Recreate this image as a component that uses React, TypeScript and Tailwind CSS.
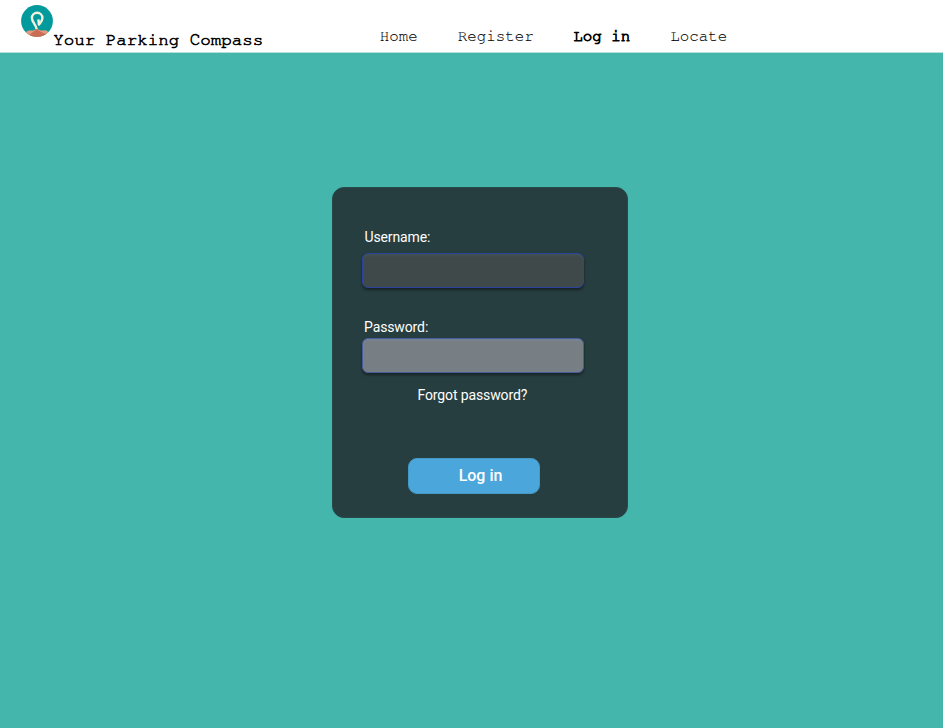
import React from "react";

function Logo() {
  return (
    <svg className="ml-[21.3px] mt-[5px] h-8 w-8 shrink-0" viewBox="0 0 32 32">
      <defs>
        <clipPath id="disc">
          <circle cx="16" cy="16" r="15.9" />
        </clipPath>
      </defs>
      <g clipPath="url(#disc)">
        <rect width="32" height="32" fill="#029a9d" />
        <path d="M3 28 L7.5 25.5 L12 25.5 L15.8 23.8 L20 25.6 L25 25.3 L29 28 V32 H3Z" fill="#e5997c" />
        <path d="M6.5 32 L10 28.5 L15.8 24 L20 27 L26 29.5 L24 32Z" fill="#c96e54" />
      </g>
      <path
        d="M15.6 24 C15.4 20 10.9 17.3 10.9 12.9 A5.25 5.1 0 0 1 21.4 12.9 C21.4 16.3 19.4 17.5 17.9 19.6 L17.4 14.4"
        fill="none"
        stroke="#f4f1dc"
        strokeWidth="2.4"
        strokeLinejoin="round"
      />
    </svg>
  );
}

export default function App() {
  return (
    <div className="flex h-[728px] w-[943px] flex-col overflow-hidden bg-[#44b6ac] font-[Roboto,sans-serif]">
      <header className="flex h-[53px] shrink-0 items-start border-b border-[#b4e0dc] bg-white font-['Nimbus_Mono_PS','FreeMono','Courier_Prime','Liberation_Mono',monospace] text-black">
        <Logo />
        <h1 className="mt-[30px] w-[326.5px] whitespace-nowrap text-[17.5px] leading-5 [-webkit-text-stroke:0.6px_black]">
          Your Parking Compass
        </h1>
        <nav className="mt-[26px] flex whitespace-nowrap text-[15.8px] leading-5 text-black [-webkit-text-stroke:0.1px_black]">
          <a className="w-[78px]">Home</a>
          <a className="w-[115.5px]">Register</a>
          <a className="w-[97px] [-webkit-text-stroke:0.85px_black]">Log in</a>
          <a>Locate</a>
        </nav>
      </header>
      <main className="flex flex-1 items-start pl-[332px] pt-[134px]">
        <form className="flex h-[331px] w-[296px] flex-col items-start rounded-xl border border-[#28494a] bg-[#273e40] pl-[29px] pt-[39px] text-white">
          <label className="ml-[2.5px] text-[14px] leading-5 tracking-[-0.12px]">Username:</label>
          <div className="mt-[6px] h-[35px] w-[222px] rounded-md border border-[#2b439c] bg-[#3f494a] shadow-[0_2px_3px_rgba(0,0,0,0.45),inset_0_2px_2px_rgba(80,110,120,0.25)]" />
          <label className="ml-[2px] mt-[29px] text-[14px] leading-5 tracking-[-0.12px]">Password:</label>
          <div className="mt-px h-[35px] w-[222px] rounded-md border border-[#485da0] bg-[#777e84] shadow-[0_2px_3px_rgba(0,0,0,0.45),inset_0_2px_2px_rgba(120,135,155,0.6)]" />
          <a className="ml-[55.5px] mt-[12px] text-[14px] leading-5 tracking-[-0.12px]">Forgot password?</a>
          <button type="button" className="ml-[46px] mt-[53px] h-[36px] w-[132px] rounded-[9px] border border-[#4698c5] bg-[#4ba6db] pl-[13px] text-[16px] font-medium leading-5">
            Log in
          </button>
        </form>
      </main>
    </div>
  );
}
